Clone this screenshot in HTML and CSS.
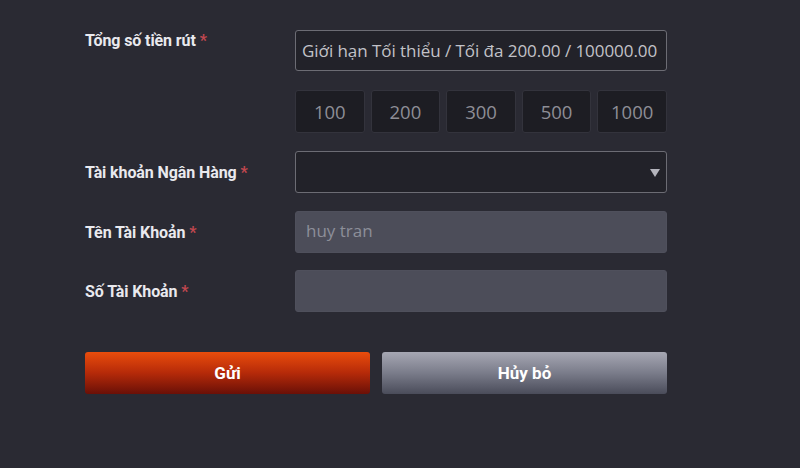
FILE: index.html
```html
<!DOCTYPE html>
<html lang="vi">
<head>
<meta charset="utf-8">
<link rel="stylesheet" href="styles.css">
</head>
<body>
<form class="form">
  <div class="row row-top">
    <label class="label">Tổng số tiền rút <span class="req">*</span></label>
    <div class="field">
      <div class="input input-dark">Giới hạn Tối thiểu / Tối đa 200.00 / 100000.00</div>
      <div class="quick">
        <button type="button" class="chip">100</button>
        <button type="button" class="chip">200</button>
        <button type="button" class="chip">300</button>
        <button type="button" class="chip">500</button>
        <button type="button" class="chip">1000</button>
      </div>
    </div>
  </div>
  <div class="row row-select">
    <label class="label">Tài khoản Ngân Hàng <span class="req">*</span></label>
    <div class="input input-dark select"><span class="arrow"></span></div>
  </div>
  <div class="row row-name">
    <label class="label">Tên Tài Khoản <span class="req">*</span></label>
    <div class="input input-grey"><span class="placeholder">huy tran</span></div>
  </div>
  <div class="row row-acc">
    <label class="label">Số Tài Khoản <span class="req">*</span></label>
    <div class="input input-grey"></div>
  </div>
  <div class="actions">
    <button type="button" class="btn btn-submit">Gửi</button>
    <button type="button" class="btn btn-cancel">Hủy bỏ</button>
  </div>
</form>
</body>
</html>
```

FILE: styles.css
```css
html, body {
  margin: 0;
  padding: 0;
  background: #2a2a33;
  height: 100%;
}
body {
  font-family: Roboto, "Noto Sans", sans-serif;
}
.form {
  padding: 30px 0 0 85px;
  width: 582px;
  display: flex;
  flex-direction: column;
}
.row {
  display: grid;
  grid-template-columns: 210px 372px;
  align-items: center;
}
.row-top { align-items: start; }
.row-top .label { line-height: 21px; }
.row-select { margin-top: 18px; }
.row-name { margin-top: 18px; }
.row-acc { margin-top: 17px; }
.label {
  color: #e9e9ee;
  font-weight: 700;
  font-size: 16px;
  letter-spacing: -0.1px;
}
.req { color: #c0474f; }
.field {
  display: flex;
  flex-direction: column;
}
.input {
  box-sizing: border-box;
  height: 42px;
  border-radius: 3px;
  display: flex;
  align-items: center;
  font-family: "Open Sans", "Noto Sans", sans-serif;
  font-size: 17px;
  white-space: nowrap;
  overflow: hidden;
  position: relative;
}
.input-dark {
  background: #222229;
  border: 1px solid #6c6c74;
  color: #c2c2c8;
  padding: 0 6px;
}
.row-top .input-dark { height: 41px; letter-spacing: -0.05px; }
.input-grey {
  background: #4c4d59;
  border: 1px solid #4f505c;
  padding: 0 10px;
}
.placeholder { color: #8d8f99; margin-top: -3px; }
.quick {
  margin-top: 19px;
  display: grid;
  grid-template-columns: repeat(5, 1fr);
  gap: 6px;
}
.chip {
  height: 43px;
  background: #1d1d23;
  border: 1px solid #33333c;
  border-radius: 3px;
  color: #8e8e96;
  font-family: "Open Sans", "Noto Sans", sans-serif;
  font-size: 18.5px;
  padding: 0;
}
.arrow {
  position: absolute;
  right: 6px;
  top: 17px;
  width: 0;
  height: 0;
  border-left: 5px solid transparent;
  border-right: 5px solid transparent;
  border-top: 8px solid #b4b4bc;
}
.actions {
  margin-top: 40px;
  display: grid;
  grid-template-columns: 285px 285px;
  gap: 12px;
}
.btn {
  height: 42px;
  border: none;
  border-radius: 3px;
  color: #ffffff;
  font-family: Roboto, sans-serif;
  font-weight: 700;
  font-size: 17px;
  padding: 0;
}
.btn-submit {
  background: linear-gradient(to bottom, #ea4d0c 0%, #b52a09 50%, #6a1007 100%);
}
.btn-cancel {
  background: linear-gradient(to bottom, #a6a7b3 0%, #7a7c8a 50%, #4a4c5a 100%);
}
```
